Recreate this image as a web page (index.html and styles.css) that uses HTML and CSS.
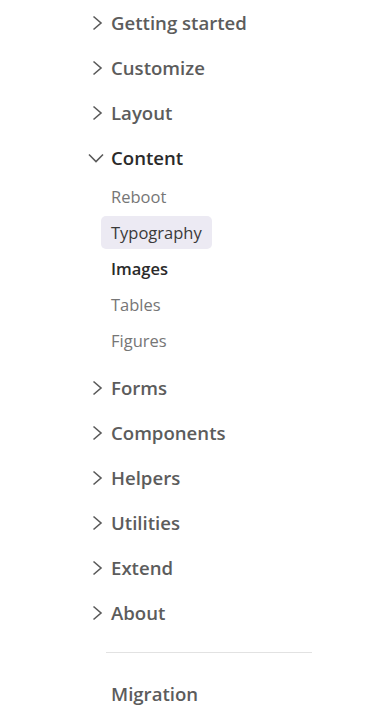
FILE: index.html
```html
<!DOCTYPE html>
<html lang="en">
<head>
<meta charset="utf-8">
<title>Docs navigation</title>
<link rel="stylesheet" href="styles.css">
</head>
<body>
<nav class="sidebar">
  <ul class="links">
    <li><button class="group"><svg class="chev" viewBox="0 0 12 16"><path d="M2 1.5 9.5 8 2 14.5"/></svg><span>Getting started</span></button></li>
    <li><button class="group"><svg class="chev" viewBox="0 0 12 16"><path d="M2 1.5 9.5 8 2 14.5"/></svg><span>Customize</span></button></li>
    <li><button class="group"><svg class="chev" viewBox="0 0 12 16"><path d="M2 1.5 9.5 8 2 14.5"/></svg><span>Layout</span></button></li>
    <li>
      <button class="group open"><svg class="chev down" viewBox="0 0 16 12"><path d="M1 2.5 8 9.5 15 2.5"/></svg><span>Content</span></button>
      <ul class="sub">
        <li><a class="sub-link">Reboot</a></li>
        <li><a class="sub-link hover">Typography</a></li>
        <li><a class="sub-link active">Images</a></li>
        <li><a class="sub-link">Tables</a></li>
        <li><a class="sub-link">Figures</a></li>
      </ul>
    </li>
    <li><button class="group"><svg class="chev" viewBox="0 0 12 16"><path d="M2 1.5 9.5 8 2 14.5"/></svg><span>Forms</span></button></li>
    <li><button class="group"><svg class="chev" viewBox="0 0 12 16"><path d="M2 1.5 9.5 8 2 14.5"/></svg><span>Components</span></button></li>
    <li><button class="group"><svg class="chev" viewBox="0 0 12 16"><path d="M2 1.5 9.5 8 2 14.5"/></svg><span>Helpers</span></button></li>
    <li><button class="group"><svg class="chev" viewBox="0 0 12 16"><path d="M2 1.5 9.5 8 2 14.5"/></svg><span>Utilities</span></button></li>
    <li><button class="group"><svg class="chev" viewBox="0 0 12 16"><path d="M2 1.5 9.5 8 2 14.5"/></svg><span>Extend</span></button></li>
    <li><button class="group"><svg class="chev" viewBox="0 0 12 16"><path d="M2 1.5 9.5 8 2 14.5"/></svg><span>About</span></button></li>
    <li class="divider"></li>
    <li><a class="plain">Migration</a></li>
  </ul>
</nav>
</body>
</html>
```
FILE: styles.css
```css
html, body {
  margin: 0;
  padding: 0;
  background: #fff;
}
body {
  font-family: "Open Sans", "Noto Sans", sans-serif;
  width: 376px;
  height: 712px;
  overflow: hidden;
}
.sidebar {
  padding-left: 90px;
}
.links, .sub {
  list-style: none;
  margin: 0;
  padding: 0;
}
.group {
  display: flex;
  align-items: center;
  gap: 6px;
  height: 45px;
  padding: 0;
  border: 0;
  background: none;
  font-family: inherit;
  font-size: 18.6px;
  font-weight: 600;
  color: #5c5c5c;
  cursor: pointer;
}
.chev {
  width: 15px;
  height: 16px;
  flex: none;
  fill: none;
  stroke: #5a5a5a;
  stroke-width: 1.6;
}
.chev.down {
  width: 16px;
  height: 12px;
  margin-left: -2px;
  margin-right: 1px;
}
.group.open {
  color: #2a2a2a;
}
.sub {
  display: flex;
  flex-direction: column;
  gap: 3px;
  padding-left: 11px;
  padding-bottom: 8px;
}
.sub-link {
  display: inline-flex;
  align-items: center;
  height: 33px;
  padding: 0 10px;
  border-radius: 5px;
  font-size: 16.5px;
  color: #767676;
}
.sub-link.hover {
  background: #eceaf3;
  color: #3a3a3a;
}
.sub-link.active {
  font-weight: 600;
  color: #2a2a2a;
}
.divider {
  height: 1px;
  background: #e2e2e2;
  width: 206px;
  margin: 17px 0 18px 16px;
}
.plain {
  display: flex;
  align-items: center;
  height: 45px;
  padding-left: 21px;
  font-size: 18.6px;
  font-weight: 600;
  color: #5c5c5c;
}
```
